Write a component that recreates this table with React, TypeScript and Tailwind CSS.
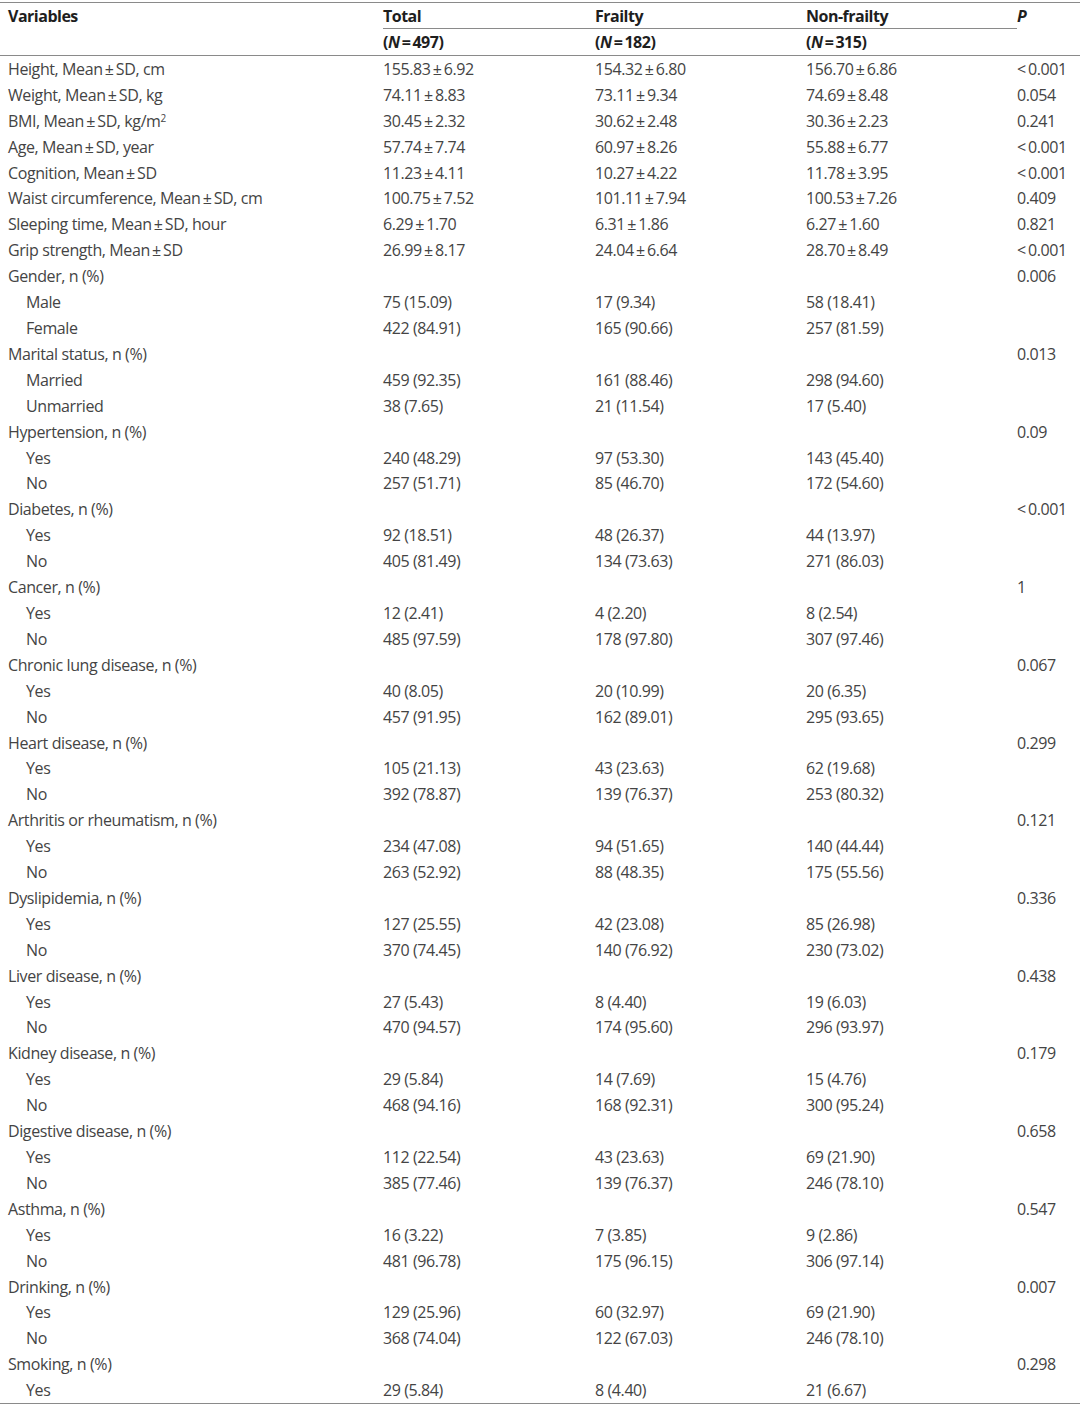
type Row = {
  label: React.ReactNode
  sub?: boolean
  total?: string
  frailty?: string
  nonFrailty?: string
  p?: string
}

const t = '\u2009'
const pm = (a: string, b: string) => `${a}${t}±${t}${b}`
const lt = `<${t}0.001`

const rows: Row[] = [
  { label: `Height, Mean${t}±${t}SD, cm`, total: pm('155.83', '6.92'), frailty: pm('154.32', '6.80'), nonFrailty: pm('156.70', '6.86'), p: lt },
  { label: `Weight, Mean${t}±${t}SD, kg`, total: pm('74.11', '8.83'), frailty: pm('73.11', '9.34'), nonFrailty: pm('74.69', '8.48'), p: '0.054' },
  {
    label: (
      <>
        BMI, Mean{t}±{t}SD, kg/m<sup className="text-[10px]">2</sup>
      </>
    ),
    total: pm('30.45', '2.32'),
    frailty: pm('30.62', '2.48'),
    nonFrailty: pm('30.36', '2.23'),
    p: '0.241',
  },
  { label: `Age, Mean${t}±${t}SD, year`, total: pm('57.74', '7.74'), frailty: pm('60.97', '8.26'), nonFrailty: pm('55.88', '6.77'), p: lt },
  { label: `Cognition, Mean${t}±${t}SD`, total: pm('11.23', '4.11'), frailty: pm('10.27', '4.22'), nonFrailty: pm('11.78', '3.95'), p: lt },
  { label: `Waist circumference, Mean${t}±${t}SD, cm`, total: pm('100.75', '7.52'), frailty: pm('101.11', '7.94'), nonFrailty: pm('100.53', '7.26'), p: '0.409' },
  { label: `Sleeping time, Mean${t}±${t}SD, hour`, total: pm('6.29', '1.70'), frailty: pm('6.31', '1.86'), nonFrailty: pm('6.27', '1.60'), p: '0.821' },
  { label: `Grip strength, Mean${t}±${t}SD`, total: pm('26.99', '8.17'), frailty: pm('24.04', '6.64'), nonFrailty: pm('28.70', '8.49'), p: lt },
  { label: 'Gender, n (%)', p: '0.006' },
  { label: 'Male', sub: true, total: '75 (15.09)', frailty: '17 (9.34)', nonFrailty: '58 (18.41)' },
  { label: 'Female', sub: true, total: '422 (84.91)', frailty: '165 (90.66)', nonFrailty: '257 (81.59)' },
  { label: 'Marital status, n (%)', p: '0.013' },
  { label: 'Married', sub: true, total: '459 (92.35)', frailty: '161 (88.46)', nonFrailty: '298 (94.60)' },
  { label: 'Unmarried', sub: true, total: '38 (7.65)', frailty: '21 (11.54)', nonFrailty: '17 (5.40)' },
  { label: 'Hypertension, n (%)', p: '0.09' },
  { label: 'Yes', sub: true, total: '240 (48.29)', frailty: '97 (53.30)', nonFrailty: '143 (45.40)' },
  { label: 'No', sub: true, total: '257 (51.71)', frailty: '85 (46.70)', nonFrailty: '172 (54.60)' },
  { label: 'Diabetes, n (%)', p: lt },
  { label: 'Yes', sub: true, total: '92 (18.51)', frailty: '48 (26.37)', nonFrailty: '44 (13.97)' },
  { label: 'No', sub: true, total: '405 (81.49)', frailty: '134 (73.63)', nonFrailty: '271 (86.03)' },
  { label: 'Cancer, n (%)', p: '1' },
  { label: 'Yes', sub: true, total: '12 (2.41)', frailty: '4 (2.20)', nonFrailty: '8 (2.54)' },
  { label: 'No', sub: true, total: '485 (97.59)', frailty: '178 (97.80)', nonFrailty: '307 (97.46)' },
  { label: 'Chronic lung disease, n (%)', p: '0.067' },
  { label: 'Yes', sub: true, total: '40 (8.05)', frailty: '20 (10.99)', nonFrailty: '20 (6.35)' },
  { label: 'No', sub: true, total: '457 (91.95)', frailty: '162 (89.01)', nonFrailty: '295 (93.65)' },
  { label: 'Heart disease, n (%)', p: '0.299' },
  { label: 'Yes', sub: true, total: '105 (21.13)', frailty: '43 (23.63)', nonFrailty: '62 (19.68)' },
  { label: 'No', sub: true, total: '392 (78.87)', frailty: '139 (76.37)', nonFrailty: '253 (80.32)' },
  { label: 'Arthritis or rheumatism, n (%)', p: '0.121' },
  { label: 'Yes', sub: true, total: '234 (47.08)', frailty: '94 (51.65)', nonFrailty: '140 (44.44)' },
  { label: 'No', sub: true, total: '263 (52.92)', frailty: '88 (48.35)', nonFrailty: '175 (55.56)' },
  { label: 'Dyslipidemia, n (%)', p: '0.336' },
  { label: 'Yes', sub: true, total: '127 (25.55)', frailty: '42 (23.08)', nonFrailty: '85 (26.98)' },
  { label: 'No', sub: true, total: '370 (74.45)', frailty: '140 (76.92)', nonFrailty: '230 (73.02)' },
  { label: 'Liver disease, n (%)', p: '0.438' },
  { label: 'Yes', sub: true, total: '27 (5.43)', frailty: '8 (4.40)', nonFrailty: '19 (6.03)' },
  { label: 'No', sub: true, total: '470 (94.57)', frailty: '174 (95.60)', nonFrailty: '296 (93.97)' },
  { label: 'Kidney disease, n (%)', p: '0.179' },
  { label: 'Yes', sub: true, total: '29 (5.84)', frailty: '14 (7.69)', nonFrailty: '15 (4.76)' },
  { label: 'No', sub: true, total: '468 (94.16)', frailty: '168 (92.31)', nonFrailty: '300 (95.24)' },
  { label: 'Digestive disease, n (%)', p: '0.658' },
  { label: 'Yes', sub: true, total: '112 (22.54)', frailty: '43 (23.63)', nonFrailty: '69 (21.90)' },
  { label: 'No', sub: true, total: '385 (77.46)', frailty: '139 (76.37)', nonFrailty: '246 (78.10)' },
  { label: 'Asthma, n (%)', p: '0.547' },
  { label: 'Yes', sub: true, total: '16 (3.22)', frailty: '7 (3.85)', nonFrailty: '9 (2.86)' },
  { label: 'No', sub: true, total: '481 (96.78)', frailty: '175 (96.15)', nonFrailty: '306 (97.14)' },
  { label: 'Drinking, n (%)', p: '0.007' },
  { label: 'Yes', sub: true, total: '129 (25.96)', frailty: '60 (32.97)', nonFrailty: '69 (21.90)' },
  { label: 'No', sub: true, total: '368 (74.04)', frailty: '122 (67.03)', nonFrailty: '246 (78.10)' },
  { label: 'Smoking, n (%)', p: '0.298' },
  { label: 'Yes', sub: true, total: '29 (5.84)', frailty: '8 (4.40)', nonFrailty: '21 (6.67)' },
]

const cols = 'grid grid-cols-[383px_212px_211px_211px_1fr]'

function Header() {
  return (
    <div className="border-b border-[#8a8a8a] font-bold tracking-[-0.5px] text-[#1e1e1e]">
      <div className={`${cols} h-[26px] items-center`}>
        <div className="pl-2">Variables</div>
        <div className="col-span-3 flex h-full flex-col">
          <div className="grid flex-1 grid-cols-[212px_211px_211px] items-center border-b border-[#8a8a8a]">
            <div>Total</div>
            <div>Frailty</div>
            <div>Non-frailty</div>
          </div>
        </div>
        <div className="italic">P</div>
      </div>
      <div className={`${cols} h-[26px] items-center`}>
        <div />
        <div>
          (<i>N</i>
          {t}={t}497)
        </div>
        <div>
          (<i>N</i>
          {t}={t}182)
        </div>
        <div>
          (<i>N</i>
          {t}={t}315)
        </div>
        <div />
      </div>
    </div>
  )
}

export default function App() {
  return (
    <div
      className="w-[1080px] bg-white pt-[2px] text-[16px] leading-none text-[#444]"
      style={{ fontFamily: '"Open Sans", "Noto Sans", sans-serif' }}
    >
      <div className="border-t border-[#8a8a8a]">
        <Header />
        <div className="border-b border-[#8a8a8a]">
          {rows.map((row, i) => (
            <div key={i} className={`${cols} h-[25.92px] items-center tracking-[-0.4px]`}>
              <div className={row.sub ? 'pl-[26px]' : 'pl-2'}>{row.label}</div>
              <div>{row.total}</div>
              <div>{row.frailty}</div>
              <div>{row.nonFrailty}</div>
              <div>{row.p}</div>
            </div>
          ))}
        </div>
      </div>
    </div>
  )
}
